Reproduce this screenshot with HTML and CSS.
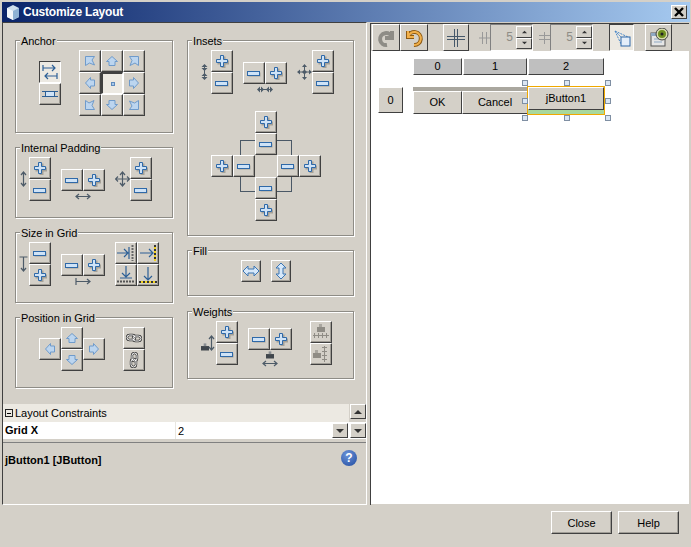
FILE: index.html
```html
<!DOCTYPE html>
<html>

<head>
    <meta charset="utf-8" />
    <title>Customize Layout</title>
    <link rel="stylesheet" href="styles.css">
</head>

<body>
    <!-- icon sprite -->
    <svg class="sprite" xmlns="http://www.w3.org/2000/svg">
        <symbol id="plus" viewBox="0 0 14 14">
            <path d="M5.5 1.5h4v4h4v4h-4v4h-4v-4h-4v-4h4z" transform="translate(1 1)" fill="#a5a198" />
            <path d="M5.5 1.5h3v4h4v3h-4v4h-3v-4h-4v-3h4z" fill="#cfe3f7" stroke="#2f69a8" />
        </symbol>
        <symbol id="minus" viewBox="0 0 14 14">
            <rect x="1.5" y="6.5" width="12" height="4" fill="#a5a198" />
            <rect x="0.5" y="5.5" width="12" height="4" fill="#cfe3f7" stroke="#2f69a8" />
        </symbol>
        <symbol id="arrow" viewBox="0 0 14 14">
            <path d="M7 2.500L12.500 7.500H10V11.500H4V7.500H1.500z" fill="#bcd5ef" stroke="#6f9bcb" />
        </symbol>
        <symbol id="corner" viewBox="0 0 14 14">
            <path d="M2.500 2.500H11.500L9 6 11.500 11 6.500 9 2.500 11.500z" fill="#bcd5ef" stroke="#6f9bcb" />
        </symbol>
        <symbol id="dot" viewBox="0 0 14 14">
            <rect x="5.5" y="5.5" width="3" height="3" fill="#a8c8ea" stroke="#5f8bbd" />
        </symbol>
        <symbol id="flip-h" viewBox="0 0 16 16">
            <path d="M1 1v6M1 4h12M10 1l3 3-3 3M15 9v6M15 12H3M6 9l-3 3 3 3" fill="none" stroke="#2c5f96" stroke-width="1.2" />
        </symbol>
        <symbol id="flip-v" viewBox="0 0 16 16">
            <rect x="3.500" y="5.500" width="9" height="5" fill="#cfe3f7" stroke="#2c5f96" />
            <path d="M0 5.500h16M0 10.500h16" stroke="#2c5f96" />
        </symbol>
        <symbol id="fill-h" viewBox="0 0 18 14">
            <path d="M1 7l5-5v3h6V2l5 5-5 5V9H6v3z" fill="#d6e8fa" stroke="#3c76b4" />
        </symbol>
        <symbol id="fill-v" viewBox="0 0 14 18">
            <path d="M7 1l5 5H9v6h3l-5 5-5-5h3V6H2z" fill="#d6e8fa" stroke="#3c76b4" />
        </symbol>
        <symbol id="link-h" viewBox="0 0 16 16">
            <rect x="1" y="5" width="8" height="5" rx="2.500" fill="none" stroke="#333" stroke-width="2.400" />
            <rect x="7" y="6" width="8" height="5" rx="2.500" fill="none" stroke="#333" stroke-width="2.400" />
            <rect x="1" y="5" width="8" height="5" rx="2.500" fill="none" stroke="#fff" stroke-width="1" />
            <rect x="7" y="6" width="8" height="5" rx="2.500" fill="none" stroke="#fff" stroke-width="1" />
        </symbol>
        <symbol id="cell-r" viewBox="0 0 18 18">
            <path d="M0 9h10M7 5l4 4-4 4M12 3v12" fill="none" stroke="#2c5f96" stroke-width="1.200" />
            <path d="M15.500 1v16" stroke="#666" stroke-width="2" stroke-dasharray="2 1" />
        </symbol>
        <symbol id="cell-ry" viewBox="0 0 18 18">
            <path d="M1 9h13M10 5l4 4-4 4" fill="none" stroke="#2c5f96" stroke-width="1.200" />
            <path d="M16 1v16" stroke="#f2d21e" stroke-width="2" />
            <path d="M16 1v16" stroke="#333" stroke-width="2" stroke-dasharray="2 2" />
        </symbol>
        <symbol id="cell-d" viewBox="0 0 18 18">
            <path d="M9 0v10M5 7l4 4 4-4M3 12h12" fill="none" stroke="#2c5f96" stroke-width="1.200" />
            <path d="M0 15.500h18" stroke="#555" stroke-width="2" stroke-dasharray="2 1" />
        </symbol>
        <symbol id="cell-dy" viewBox="0 0 18 18">
            <path d="M9 1v13M5 10l4 4 4-4" fill="none" stroke="#2c5f96" stroke-width="1.200" />
            <path d="M0 16h18" stroke="#f2d21e" stroke-width="2" />
            <path d="M0 16h18" stroke="#333" stroke-width="2" stroke-dasharray="2 2" />
        </symbol>
        <symbol id="axis-v" viewBox="0 0 9 16">
            <path d="M4.500 1v14M2 4l2.500-3L7 4M2 12l2.500 3L7 12" fill="none" stroke="#4d5b68" stroke-width="1.200" />
        </symbol>
        <symbol id="axis-h" viewBox="0 0 16 9">
            <path d="M1 4.500h14M4 2L1 4.500 4 7M12 2l3 2.500L12 7" fill="none" stroke="#4d5b68" stroke-width="1.200" />
        </symbol>
        <symbol id="axis-both" viewBox="0 0 15 16">
            <path d="M7.500 1v14M.5 8h14M5 4l2.500-3L10 4M5 12l2.500 3 2.500-3M3 5.500L.5 8 3 10.500M12 5.500L14.500 8 12 10.500" fill="none" stroke="#4d5b68" stroke-width="1.200" />
        </symbol>
        <symbol id="size-v" viewBox="0 0 9 16">
            <path d="M.5 1h8M4.500 1v14M2 12l2.500 3L7 12" fill="none" stroke="#4d5b68" stroke-width="1.200" />
        </symbol>
        <symbol id="size-h" viewBox="0 0 16 9">
            <path d="M1 1v7M1 4.500h14M12 2l3 2.500L12 7" fill="none" stroke="#4d5b68" stroke-width="1.200" />
        </symbol>
        <symbol id="inset-v" viewBox="0 0 7 16">
            <path d="M3.500 0L6.500 3h-6zM3.500 7L6.500 4h-6zM3.500 9l3 3h-6zM3.500 16l3-3h-6z" fill="#4d5b68" />
            <path d="M3.500 1v14" stroke="#4d5b68" />
        </symbol>
        <symbol id="inset-h" viewBox="0 0 16 7">
            <path d="M0 3.500L3 .5v6zM7 3.500L4 .5v6zM9 3.500l3-3v6zM16 3.500l-3-3v6z" fill="#4d5b68" />
            <path d="M1 3.500h14" stroke="#4d5b68" />
        </symbol>
        <symbol id="inset-both" viewBox="0 0 15 16">
            <path d="M7.500 0l2.500 3H5zM7.500 16L5 13h5zM0 8l3-2.500v5zM15 8l-3-2.500v5zM5 8l2.500-2.500L10 8l-2.500 2.500z" fill="#4d5b68" />
            <path d="M7.500 1v14M1 8h13" stroke="#4d5b68" />
        </symbol>
        <symbol id="weight" viewBox="0 0 9 9">
            <rect x="0" y="4" width="9" height="5" fill="#40464c" />
            <rect x="3" y="1" width="3" height="3" fill="#8b8f93" />
        </symbol>
        <symbol id="w-grid-h" viewBox="0 0 16 16">
            <rect x="4" y="3" width="8" height="5" fill="#8f8c85" />
            <rect x="6" y="0" width="3" height="3" fill="#a9a69f" />
            <path d="M0 11.500h16M1.500 9v5M5.500 9v5M9.500 9v5M13.500 9v5" stroke="#8f8c85" />
        </symbol>
        <symbol id="w-grid-v" viewBox="0 0 16 16">
            <rect x="0" y="7" width="8" height="5" fill="#8f8c85" />
            <rect x="2" y="4" width="3" height="3" fill="#a9a69f" />
            <path d="M11.500 0v16M9 1.500h5M9 5.500h5M9 9.500h5M9 13.500h5" stroke="#8f8c85" />
        </symbol>
        <symbol id="drop" viewBox="0 0 8 6">
            <path d="M0 1h8L4 5z" fill="#333" />
        </symbol>
    </svg>

    <div class="window">
        <div class="titlebar">
            <svg class="cube" viewBox="0 0 14 15">
                <path d="M7 0l6 3v9l-6 3-6-3V3z" fill="#cfdfee" />
                <path d="M1 3l6 3v9l-6-3z" fill="#f2f6fa" />
                <path d="M13 3L7 6v9l6-3z" fill="#8fb2d4" />
            </svg>
            <span class="title-text">Customize Layout</span>
            <button class="close-x">
                <svg viewBox="0 0 10 10" width="10" height="10">
                    <path d="M1 1l8 8M9 1L1 9" stroke="#000" stroke-width="2.400" />
                </svg>
            </button>
        </div>

        <div class="main">
            <!-- left side: constraints editor -->
            <div class="left">
                <div class="editor">
                    <div class="col col-left">
                        <div class="group anchor-box">
                            <span class="legend">Anchor</span>
                            <div class="row row-anchor">
                                <div class="stack anchor-toggle">
                                    <button class="btn pressed"><svg class="i16"><use href="#flip-h" /></svg></button>
                                    <button class="btn"><svg class="i16"><use href="#flip-v" /></svg></button>
                                </div>
                                <div class="anchor-grid">
                                    <button class="btn"><svg class="i14"><use href="#corner" /></svg></button>
                                    <button class="btn"><svg class="i14"><use href="#arrow" /></svg></button>
                                    <button class="btn"><svg class="i14 rot90"><use href="#corner" /></svg></button>
                                    <button class="btn"><svg class="i14 rot270"><use href="#arrow" /></svg></button>
                                    <button class="btn pressed heavy"><svg class="i14"><use href="#dot" /></svg></button>
                                    <button class="btn"><svg class="i14 rot90"><use href="#arrow" /></svg></button>
                                    <button class="btn"><svg class="i14 rot270"><use href="#corner" /></svg></button>
                                    <button class="btn"><svg class="i14 rot180"><use href="#arrow" /></svg></button>
                                    <button class="btn"><svg class="i14 rot180"><use href="#corner" /></svg></button>
                                </div>
                            </div>
                        </div>

                        <div class="group short">
                            <span class="legend">Internal Padding</span>
                            <div class="row">
                                <div class="axis-v">
                                    <svg class="lab-v first"><use href="#axis-v" /></svg>
                                    <div class="stack">
                                        <button class="btn"><svg class="i14"><use href="#plus" /></svg></button>
                                        <button class="btn"><svg class="i14"><use href="#minus" /></svg></button>
                                    </div>
                                </div>
                                <div class="axis-h">
                                    <div class="pair">
                                        <button class="btn"><svg class="i14"><use href="#minus" /></svg></button>
                                        <button class="btn"><svg class="i14"><use href="#plus" /></svg></button>
                                    </div>
                                    <svg class="lab-h"><use href="#axis-h" /></svg>
                                </div>
                                <div class="axis-v next">
                                    <svg class="lab-both"><use href="#axis-both" /></svg>
                                    <div class="stack">
                                        <button class="btn"><svg class="i14"><use href="#plus" /></svg></button>
                                        <button class="btn"><svg class="i14"><use href="#minus" /></svg></button>
                                    </div>
                                </div>
                            </div>
                        </div>

                        <div class="group short">
                            <span class="legend">Size in Grid</span>
                            <div class="row">
                                <div class="axis-v">
                                    <svg class="lab-v first"><use href="#size-v" /></svg>
                                    <div class="stack">
                                        <button class="btn"><svg class="i14"><use href="#minus" /></svg></button>
                                        <button class="btn"><svg class="i14"><use href="#plus" /></svg></button>
                                    </div>
                                </div>
                                <div class="axis-h">
                                    <div class="pair">
                                        <button class="btn"><svg class="i14"><use href="#minus" /></svg></button>
                                        <button class="btn"><svg class="i14"><use href="#plus" /></svg></button>
                                    </div>
                                    <svg class="lab-h"><use href="#size-h" /></svg>
                                </div>
                                <div class="cell-grid">
                                    <button class="btn"><svg class="i18"><use href="#cell-r" /></svg></button>
                                    <button class="btn"><svg class="i18"><use href="#cell-ry" /></svg></button>
                                    <button class="btn"><svg class="i18"><use href="#cell-d" /></svg></button>
                                    <button class="btn"><svg class="i18"><use href="#cell-dy" /></svg></button>
                                </div>
                            </div>
                        </div>

                        <div class="group short">
                            <span class="legend">Position in Grid</span>
                            <div class="row row-position">
                                <div class="move-grid">
                                    <button class="btn mv-up"><svg class="i14"><use href="#arrow" /></svg></button>
                                    <button class="btn mv-left"><svg class="i14 rot270"><use href="#arrow" /></svg></button>
                                    <button class="btn mv-right"><svg class="i14 rot90"><use href="#arrow" /></svg></button>
                                    <button class="btn mv-down"><svg class="i14 rot180"><use href="#arrow" /></svg></button>
                                </div>
                                <div class="stack link-stack">
                                    <button class="btn"><svg class="i16"><use href="#link-h" /></svg></button>
                                    <button class="btn"><svg class="i16 rot90"><use href="#link-h" /></svg></button>
                                </div>
                            </div>
                        </div>
                    </div>

                    <div class="col col-right">
                        <div class="group insets-box">
                            <span class="legend">Insets</span>
                            <div class="row row-insets">
                                <div class="axis-v">
                                    <svg class="lab-inset"><use href="#inset-v" /></svg>
                                    <div class="stack">
                                        <button class="btn"><svg class="i14"><use href="#plus" /></svg></button>
                                        <button class="btn"><svg class="i14"><use href="#minus" /></svg></button>
                                    </div>
                                </div>
                                <div class="axis-h">
                                    <div class="pair">
                                        <button class="btn"><svg class="i14"><use href="#minus" /></svg></button>
                                        <button class="btn"><svg class="i14"><use href="#plus" /></svg></button>
                                    </div>
                                    <svg class="lab-h"><use href="#inset-h" /></svg>
                                </div>
                                <div class="axis-v next">
                                    <svg class="lab-both"><use href="#inset-both" /></svg>
                                    <div class="stack">
                                        <button class="btn"><svg class="i14"><use href="#plus" /></svg></button>
                                        <button class="btn"><svg class="i14"><use href="#minus" /></svg></button>
                                    </div>
                                </div>
                            </div>
                            <div class="cross">
                                <div class="cross-lines"></div>
                                <button class="btn cr-t1"><svg class="i14"><use href="#plus" /></svg></button>
                                <button class="btn cr-t2"><svg class="i14"><use href="#minus" /></svg></button>
                                <button class="btn cr-l1"><svg class="i14"><use href="#plus" /></svg></button>
                                <button class="btn cr-l2"><svg class="i14"><use href="#minus" /></svg></button>
                                <button class="btn cr-r2"><svg class="i14"><use href="#minus" /></svg></button>
                                <button class="btn cr-r1"><svg class="i14"><use href="#plus" /></svg></button>
                                <button class="btn cr-b2"><svg class="i14"><use href="#minus" /></svg></button>
                                <button class="btn cr-b1"><svg class="i14"><use href="#plus" /></svg></button>
                            </div>
                        </div>

                        <div class="group fill-box">
                            <span class="legend">Fill</span>
                            <div class="row row-fill">
                                <button class="btn narrow"><svg class="i-fill-h"><use href="#fill-h" /></svg></button>
                                <button class="btn narrow"><svg class="i-fill-v"><use href="#fill-v" /></svg></button>
                            </div>
                        </div>

                        <div class="group weights-box">
                            <span class="legend">Weights</span>
                            <div class="row row-insets">
                                <div class="axis-v">
                                    <div class="lab-weight-v">
                                        <svg class="i-weight"><use href="#weight" /></svg>
                                        <svg class="lab-v"><use href="#axis-v" /></svg>
                                    </div>
                                    <div class="stack">
                                        <button class="btn"><svg class="i14"><use href="#plus" /></svg></button>
                                        <button class="btn"><svg class="i14"><use href="#minus" /></svg></button>
                                    </div>
                                </div>
                                <div class="axis-h weight-h">
                                    <div class="pair">
                                        <button class="btn"><svg class="i14"><use href="#minus" /></svg></button>
                                        <button class="btn"><svg class="i14"><use href="#plus" /></svg></button>
                                    </div>
                                    <svg class="i-weight"><use href="#weight" /></svg>
                                    <svg class="lab-h tight"><use href="#axis-h" /></svg>
                                </div>
                                <div class="stack link-stack">
                                    <button class="btn"><svg class="i16"><use href="#w-grid-h" /></svg></button>
                                    <button class="btn"><svg class="i16"><use href="#w-grid-v" /></svg></button>
                                </div>
                            </div>
                        </div>
                    </div>
                </div>

                <!-- property sheet -->
                <div class="props">
                    <div class="prop-head">
                        <div class="prop-cat"><span class="collapse"></span>Layout Constraints</div>
                        <button class="scroll-btn"><svg class="i-drop flip"><use href="#drop" /></svg></button>
                    </div>
                    <div class="prop-row">
                        <div class="prop-name">Grid X</div>
                        <div class="prop-value">2</div>
                        <button class="scroll-btn"><svg class="i-drop"><use href="#drop" /></svg></button>
                        <button class="scroll-btn"><svg class="i-drop"><use href="#drop" /></svg></button>
                    </div>
                </div>
                <div class="desc">
                    <span class="desc-title">jButton1 [JButton]</span>
                    <span class="help-icon">?</span>
                </div>
            </div>

            <!-- right side: design preview -->
            <div class="right">
                <div class="toolbar">
                    <button class="tbtn t-first">
                        <svg class="i20" viewBox="0 0 20 20"><path d="M16 3v7h-7M16 10A6 6 0 1 0 11 17" fill="none" stroke="#8e8c86" stroke-width="4" /></svg>
                    </button>
                    <button class="tbtn">
                        <svg class="i20" viewBox="0 0 20 20"><path d="M4 3v6h6M4 9a6.500 6.500 0 1 1 6 8" fill="none" stroke="#8c5a14" stroke-width="4" /><path d="M4 3v6h6M4 9a6.500 6.500 0 1 1 6 8" fill="none" stroke="#f2b04a" stroke-width="2" /></svg>
                    </button>
                    <button class="tbtn t-grid">
                        <svg class="i20" viewBox="0 0 20 20"><path d="M8.500 1v18M11.500 1v18M1 8.500h18M1 11.500h18" stroke="#46586a" /></svg>
                    </button>
                    <svg class="gap-icon" viewBox="0 0 11 12"><path d="M3.500 0v12M7.500 0v12" stroke="#999" /><path d="M0 6h11" stroke="#999" /></svg>
                    <div class="spinner">
                        <span class="spin-val">5</span>
                        <div class="spin-arrows">
                            <button class="spin-btn"><svg class="i-spin flip"><use href="#drop" /></svg></button>
                            <button class="spin-btn"><svg class="i-spin"><use href="#drop" /></svg></button>
                        </div>
                    </div>
                    <svg class="gap-icon gap-v" viewBox="0 0 11 12"><path d="M0 3.500h11M0 7.500h11" stroke="#999" /><path d="M5.500 0v12" stroke="#999" /></svg>
                    <div class="spinner">
                        <span class="spin-val">5</span>
                        <div class="spin-arrows">
                            <button class="spin-btn"><svg class="i-spin flip"><use href="#drop" /></svg></button>
                            <button class="spin-btn"><svg class="i-spin"><use href="#drop" /></svg></button>
                        </div>
                    </div>
                    <button class="tbtn t-select pressed">
                        <svg class="i20" viewBox="0 0 20 20"><path d="M3 3l8 8M3 3l13 6M3 3l6 13" stroke="#4a88c8" stroke-dasharray="2 1" /><rect x="9" y="9" width="9" height="9" fill="#e4eef9" stroke="#2f69a8" /></svg>
                    </button>
                    <button class="tbtn t-preview">
                        <svg class="i20" viewBox="0 0 20 20"><rect x="2" y="5" width="14" height="13" fill="#e6e6e6" stroke="#555" /><rect x="2" y="5" width="14" height="3" fill="#8fa9c4" /><path d="M5 11h8M5 14h8" stroke="#8fa9c4" /><circle cx="13" cy="6" r="6" fill="#d8dcb0" stroke="#444" /><circle cx="13" cy="6" r="4" fill="#6f8f20" /><circle cx="13" cy="6" r="1.500" fill="#222" /></svg>
                    </button>
                </div>

                <div class="canvas">
                    <div class="form-grid">
                        <div class="col-head">0</div>
                        <div class="col-head h2">1</div>
                        <div class="col-head h3">2</div>
                        <div class="row-head">0</div>
                        <div class="cell c1"><div class="strip"></div><div class="swing">OK</div></div>
                        <div class="cell c2"><div class="strip"></div><div class="swing">Cancel</div></div>
                        <div class="cell c3 selected">
                            <div class="swing tall">jButton1</div>
                            <div class="strip-green"></div>
                            <span class="handle h-tl"></span>
                            <span class="handle h-tc"></span>
                            <span class="handle h-tr"></span>
                            <span class="handle h-ml"></span>
                            <span class="handle h-mr"></span>
                            <span class="handle h-bl"></span>
                            <span class="handle h-bc"></span>
                            <span class="handle h-br"></span>
                        </div>
                    </div>
                </div>
            </div>
        </div>

        <div class="footer">
            <button class="dlg-btn">Close</button>
            <button class="dlg-btn">Help</button>
        </div>
    </div>
</body>

</html>
```

FILE: styles.css
```css
* {
    box-sizing: border-box;
}

html,
body {
    margin: 0;
    height: 547px;
    overflow: hidden;
    background: #d4d0c8;
    font-family: "Liberation Sans", Arial, sans-serif;
    font-size: 11px;
    color: #000;
}

.sprite {
    display: none;
}

button {
    font: inherit;
    padding: 0;
    margin: 0;
}

svg {
    display: block;
}

.window {
    padding: 2px 0 0 2px;
}

/* title bar */
.titlebar {
    display: flex;
    align-items: center;
    height: 20px;
    margin-right: 1px;
    padding: 0 3px 0 4px;
    background: linear-gradient(to right, #0a246a, #a6caf0);
}

.cube {
    width: 14px;
    height: 15px;
}

.title-text {
    flex: 1;
    margin-left: 3px;
    color: #fff;
    font-size: 12px;
    font-weight: bold;
    letter-spacing: -0.2px;
}

.close-x {
    display: flex;
    align-items: center;
    justify-content: center;
    width: 16px;
    height: 14px;
    background: #d4d0c8;
    border: 1px solid;
    border-color: #fff #404040 #404040 #fff;
}

.main {
    display: flex;
    height: 483px;
}

/* left side */
.left {
    display: flex;
    flex-direction: column;
    width: 365px;
    border: 1px solid;
    border-color: #404040 #fff #fff #404040;
}

.editor {
    display: flex;
    gap: 14px;
    height: 381px;
    padding: 17px 0 0 12px;
}

.col {
    display: flex;
    flex-direction: column;
}

.col-left {
    width: 158px;
    gap: 14px;
}

.col-right {
    width: 167px;
    gap: 14px;
}

.group {
    position: relative;
    border: 1px solid #8e8c86;
    box-shadow: 1px 1px 0 #fff, inset 1px 1px 0 #fff;
}

.legend {
    position: absolute;
    left: 4px;
    top: -6px;
    padding: 0 1px;
    background: #d4d0c8;
    letter-spacing: -0.05px;
    line-height: 13px;
}

.anchor-box {
    height: 93px;
}

.short {
    height: 71px;
}

.insets-box {
    height: 196px;
}

.fill-box {
    height: 46px;
}

.weights-box {
    height: 68px;
    margin-top: 1px;
}

.row {
    display: flex;
    align-items: flex-start;
    padding-top: 9px;
}

.row-anchor,
.row-position {
    padding-left: 23px;
}

.row-insets {
    padding-left: 13px;
}

.row-fill {
    gap: 10px;
    padding-left: 53px;
}

/* swing button */
.btn {
    display: flex;
    align-items: center;
    justify-content: center;
    flex: none;
    width: 22px;
    height: 22px;
    background: #d4d0c8;
    border: 1px solid;
    border-color: #fff #404040 #404040 #fff;
    box-shadow: inset -1px -1px 0 #a09d96;
}

.btn.pressed {
    background: #ece9e2;
    border-color: #404040 #fff #fff #404040;
    box-shadow: none;
}

.btn.heavy {
    border-width: 2px 1px 1px 2px;
}

.btn.narrow {
    width: 20px;
}

.i14 {
    width: 14px;
    height: 14px;
}

.i16 {
    width: 16px;
    height: 16px;
}

.i18 {
    width: 18px;
    height: 18px;
}

.i20 {
    width: 20px;
    height: 20px;
}

.i-fill-h {
    width: 18px;
    height: 14px;
}

.i-fill-v {
    width: 14px;
    height: 18px;
}

.rot90 {
    transform: rotate(90deg);
}

.rot180 {
    transform: rotate(180deg);
}

.rot270 {
    transform: rotate(270deg);
}

.flip {
    transform: scaleY(-1);
}

/* button clusters */
.stack {
    display: flex;
    flex-direction: column;
    flex: none;
}

.pair {
    display: flex;
}

.axis-v {
    display: flex;
    align-items: center;
}

.axis-v.next {
    margin-left: 10px;
}

.axis-h {
    display: flex;
    flex-direction: column;
    align-items: center;
    margin: 12px 0 0 10px;
}

.axis-h.weight-h {
    margin-top: 7px;
}

.lab-v {
    flex: none;
    width: 9px;
    height: 16px;
}

.lab-v.first {
    margin: 0 1px 0 3px;
}

.lab-h {
    width: 16px;
    height: 9px;
    margin-top: 1px;
}

.lab-h.tight {
    margin-top: 0;
}

.lab-both {
    width: 15px;
    height: 16px;
}

.lab-inset {
    width: 7px;
    height: 16px;
    margin-right: 3px;
}

.i-weight {
    flex: none;
    width: 8px;
    height: 9px;
}

.lab-weight-v {
    display: flex;
    align-items: flex-end;
    width: 15px;
    margin-right: 0;
}

.lab-weight-v .lab-v {
    margin-left: -2px;
}

.anchor-toggle {
    margin-top: 11px;
}

.anchor-grid {
    display: grid;
    grid-template-columns: repeat(3, 22px);
    grid-auto-rows: 22px;
    margin-left: 18px;
}

.cell-grid {
    display: grid;
    grid-template-columns: repeat(2, 22px);
    grid-auto-rows: 22px;
    margin-left: 10px;
}

.move-grid {
    display: grid;
    grid-template-columns: repeat(3, 22px);
    grid-template-rows: repeat(4, 11px);
}

.mv-up {
    grid-area: 1 / 2 / 3 / 3;
}

.mv-left {
    grid-area: 2 / 1 / 4 / 2;
}

.mv-right {
    grid-area: 2 / 3 / 4 / 4;
}

.mv-down {
    grid-area: 3 / 2 / 5 / 3;
}

.link-stack {
    margin-left: 18px;
}

/* insets cross */
.cross {
    display: grid;
    grid-template-columns: repeat(5, 22px);
    grid-template-rows: repeat(5, 22px);
    margin: 17px 0 0 23px;
}

.cross-lines {
    grid-area: 2 / 2 / 5 / 5;
    margin: 7px;
    border: 1px solid #4a5866;
}

.cr-t1 {
    grid-area: 1 / 3;
}

.cr-t2 {
    grid-area: 2 / 3;
}

.cr-l1 {
    grid-area: 3 / 1;
}

.cr-l2 {
    grid-area: 3 / 2;
}

.cr-r2 {
    grid-area: 3 / 4;
}

.cr-r1 {
    grid-area: 3 / 5;
}

.cr-b2 {
    grid-area: 4 / 3;
}

.cr-b1 {
    grid-area: 5 / 3;
}

/* property sheet */
.props {
    height: 39px;
    border-bottom: 1px solid #808080;
}

.prop-head {
    display: flex;
    height: 18px;
}

.prop-cat {
    display: flex;
    align-items: center;
    flex: 1;
    padding-left: 2px;
    margin-right: 1px;
    background: #ece9e2;
}

.collapse {
    width: 8px;
    height: 8px;
    margin-right: 2px;
    background: linear-gradient(#000, #000) center / 4px 1px no-repeat;
    border: 1px solid #222;
}

.scroll-btn {
    display: flex;
    align-items: center;
    justify-content: center;
    width: 16px;
    height: 15px;
    background: #d4d0c8;
    border: 1px solid;
    border-color: #fff #404040 #404040 #fff;
}

.i-drop {
    width: 8px;
    height: 6px;
}

.prop-row {
    display: flex;
    align-items: center;
    height: 17px;
    background: #fff;
}

.prop-row .scroll-btn {
    flex: none;
    margin-left: 2px;
}

.prop-name {
    width: 173px;
    height: 17px;
    padding-left: 2px;
    border-right: 1px solid #e8e6e0;
    font-weight: bold;
    line-height: 17px;
}

.prop-value {
    flex: 1;
    padding-left: 2px;
}

.desc {
    display: flex;
    justify-content: space-between;
    padding: 7px 9px 0 2px;
}

.desc-title {
    margin-top: 1px;
    font-weight: bold;
    line-height: 18px;
}

.help-icon {
    width: 16px;
    height: 16px;
    border-radius: 50%;
    background: radial-gradient(circle at 40% 30%, #6d94d8, #1f4aa0);
    color: #fff;
    font-weight: bold;
    font-size: 12px;
    line-height: 16px;
    text-align: center;
}

/* right side */
.right {
    display: flex;
    flex-direction: column;
    width: 319px;
    margin: 1px 0 0 3px;
    border-left: 1px solid #404040;
    border-top: 1px solid #404040;
}

.toolbar {
    display: flex;
    align-items: flex-start;
    flex: none;
    height: 27px;
}

.tbtn {
    display: flex;
    align-items: center;
    justify-content: center;
    flex: none;
    width: 28px;
    height: 27px;
    background: #d4d0c8;
    border: 1px solid;
    border-color: #fff #404040 #404040 #fff;
}

.tbtn.pressed {
    background: #ece9e2;
    border-color: #404040 #fff #fff #404040;
}

.t-first {
    margin-left: 1px;
}

.t-grid {
    margin-left: 15px;
    width: 26px;
}

.t-select {
    margin-left: 16px;
    width: 25px;
}

.t-preview {
    margin-left: 11px;
    width: 27px;
}

.gap-icon {
    flex: none;
    width: 11px;
    height: 12px;
    margin: 8px 0 0 10px;
}

.gap-icon.gap-v {
    margin-left: 6px;
}

.spinner {
    display: flex;
    justify-content: flex-end;
    flex: none;
    width: 43px;
    height: 27px;
    padding: 1px 0;
    border: 1px solid #808080;
    border-right-color: #fff;
    border-bottom-color: #fff;
}

.spin-val {
    flex: 1;
    padding-right: 3px;
    color: #8e8c86;
    font-size: 12px;
    line-height: 23px;
    text-align: right;
}

.spin-arrows {
    display: flex;
    flex-direction: column;
    width: 16px;
}

.spin-btn {
    display: flex;
    align-items: center;
    justify-content: center;
    height: 12px;
    background: #d4d0c8;
    border: 1px solid;
    border-color: #fff #404040 #404040 #fff;
}

.i-spin {
    width: 5px;
    height: 4px;
}

.canvas {
    flex: 1;
    margin-bottom: 1px;
    padding: 7px 0 0 7px;
    background: #fff;
}

.form-grid {
    display: grid;
    grid-template-columns: 25px 10px 49px 66px 76px;
    grid-template-rows: 17px 12px 27px;
}

.col-head {
    grid-area: 1 / 3;
    background: #bfbfbf;
    border: 1px solid;
    border-color: #fff #404040 #404040 #fff;
    line-height: 15px;
    text-align: center;
}

.col-head.h2 {
    grid-area: 1 / 4;
    margin: 0 1px;
}

.col-head.h3 {
    grid-area: 1 / 5;
}

.row-head {
    grid-area: 3 / 1;
    height: 26px;
    background: #d4d0c8;
    border: 1px solid;
    border-color: #fff #404040 #404040 #fff;
    line-height: 24px;
    text-align: center;
}

.cell {
    display: flex;
    flex-direction: column;
}

.c1 {
    grid-area: 3 / 3;
}

.c2 {
    grid-area: 3 / 4;
}

.c3 {
    grid-area: 3 / 5;
}

.strip {
    flex: none;
    height: 4px;
    background: #aaa79f;
}

.swing {
    flex: 1;
    background: #d4d0c8;
    border: 1px solid;
    border-color: #fff #404040 #404040 #fff;
    line-height: 21px;
    text-align: center;
}

.swing.tall {
    flex: none;
    height: 23px;
}

.strip-green {
    flex: 1;
    background: #a8d89e;
}

.selected {
    position: relative;
    outline: 1px solid #f0a800;
}

.handle {
    position: absolute;
    width: 6px;
    height: 6px;
    background: #dbe6f4;
    border: 1px solid #7f8fa3;
}

.h-tl,
.h-tc,
.h-tr {
    top: -7px;
}

.h-ml,
.h-mr {
    top: 11px;
}

.h-bl,
.h-bc,
.h-br {
    bottom: -7px;
}

.h-tl,
.h-ml,
.h-bl {
    left: -6px;
}

.h-tc,
.h-bc {
    left: 36px;
}

.h-tr,
.h-mr,
.h-br {
    right: -7px;
}

/* dialog buttons */
.footer {
    display: flex;
    justify-content: flex-end;
    gap: 6px;
    padding: 6px 12px 0 0;
}

.dlg-btn {
    width: 61px;
    height: 23px;
    background: #d4d0c8;
    border: 1px solid;
    border-color: #fff #404040 #404040 #fff;
    box-shadow: inset -1px -1px 0 #a09d96;
}
```
